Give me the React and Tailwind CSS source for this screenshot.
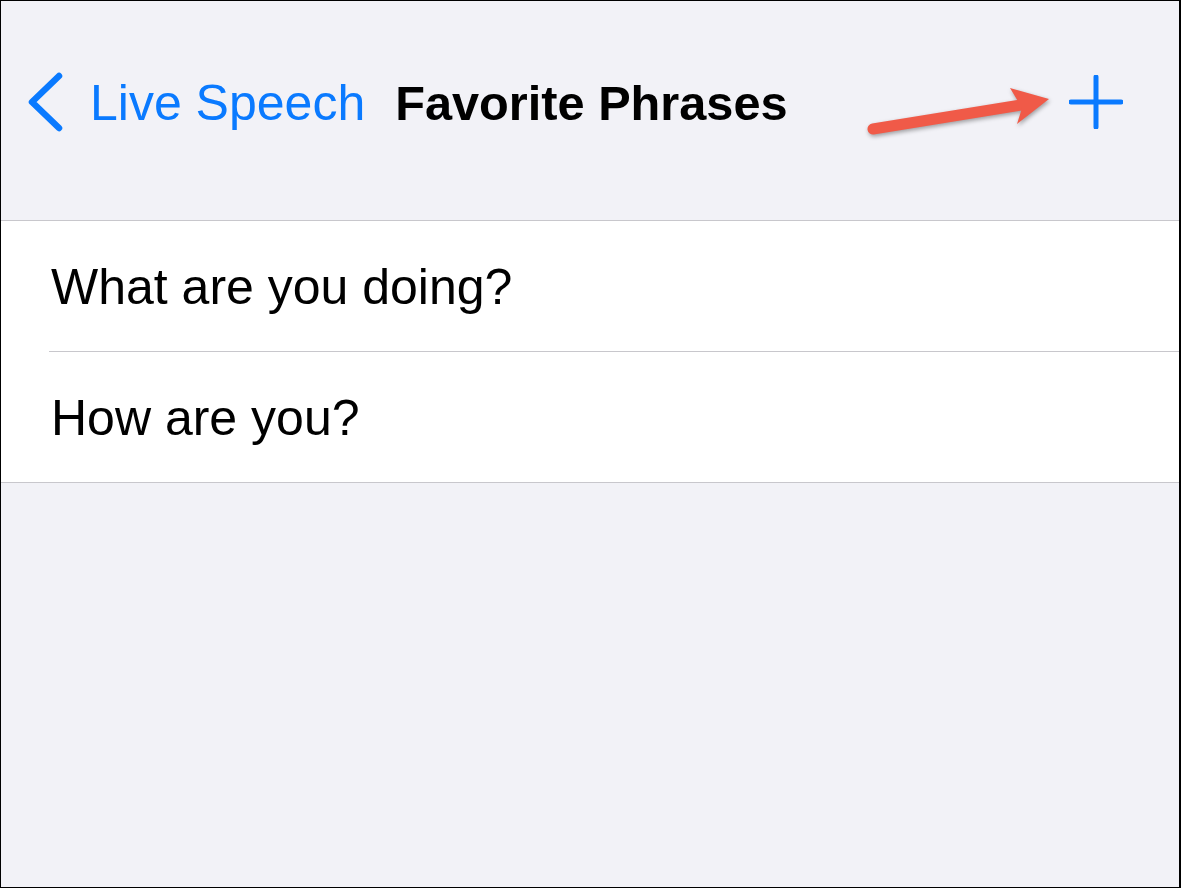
import React from "react";

const phrases = ["What are you doing?", "How are you?"];

const App = () => {
  return (
    <div
      className="relative w-[1181px] h-[888px] bg-[#f2f2f7] border border-black border-r-2 flex flex-col overflow-hidden"
      style={{ fontFamily: '"Liberation Sans", Arial, sans-serif' }}
    >
      {/* nav bar */}
      <div className="h-[219px] shrink-0">
        <div className="mt-[61px] h-[80px] flex items-center pl-[26px] pr-[56px]">
          <svg width="38" height="60" viewBox="0 0 38 60" className="shrink-0">
            <path
              d="M32 4 L5 30 L32 56"
              fill="none"
              stroke="#0a7aff"
              strokeWidth="6.5"
              strokeLinecap="round"
              strokeLinejoin="round"
            />
          </svg>
          <span className="ml-[25px] text-[50px] leading-none text-[#0a7aff] pt-[2px]">
            Live Speech
          </span>
          <span className="ml-[30px] text-[48.7px] leading-none font-bold text-black pt-[2px]">
            Favorite Phrases
          </span>
          <svg width="54" height="54" viewBox="0 0 54 54" className="ml-auto shrink-0">
            <path
              d="M27 2 V52 M2 27 H52"
              fill="none"
              stroke="#0a7aff"
              strokeWidth="5"
              strokeLinecap="round"
            />
          </svg>
        </div>
      </div>

      {/* list */}
      <div className="bg-white border-t border-b border-[#c8c7cc]">
        {phrases.map((p, i) => (
          <div key={p} className={i > 0 ? "ml-[48px] border-t border-[#c8c7cc]" : "ml-[48px]"}>
            <div className="h-[130px] flex items-center pl-[2px] text-[50px] text-black leading-none pt-[2px]">
              {p}
            </div>
          </div>
        ))}
      </div>

      {/* annotation arrow */}
      <svg
        className="absolute left-[860px] top-[80px] drop-shadow-[1px_2px_2px_rgba(0,0,0,0.35)]"
        width="200"
        height="60"
        viewBox="0 0 200 60"
      >
        <path
          d="M12 48 L160 24"
          fill="none"
          stroke="#f05a48"
          strokeWidth="11"
          strokeLinecap="round"
        />
        <path d="M149 7 L188 18 L156 43 L161 27 Z" fill="#f05a48" />
      </svg>
    </div>
  );
};

export default App;
